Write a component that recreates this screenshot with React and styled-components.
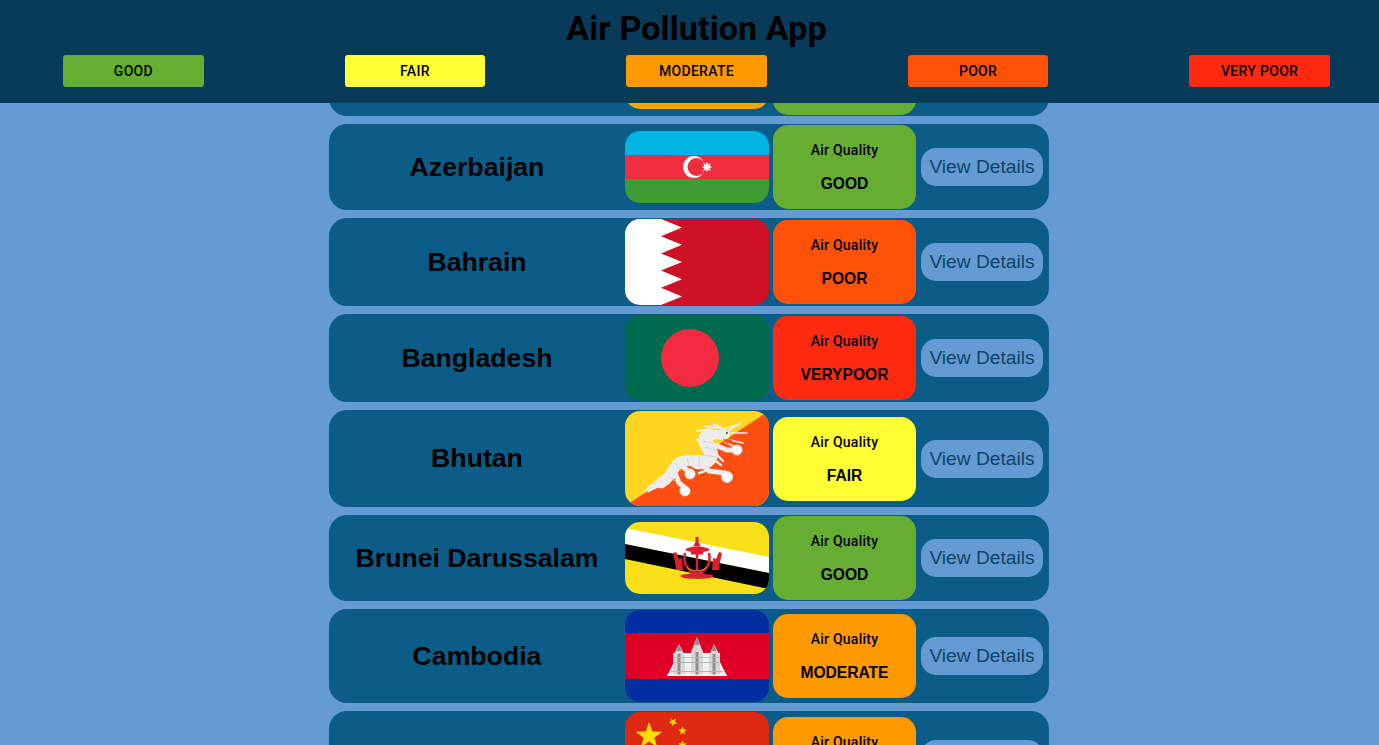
import React from "react";
import styled, { createGlobalStyle } from "styled-components";

const levels = {
  GOOD: "#65ae32",
  FAIR: "#ffff33",
  MODERATE: "#ff9900",
  POOR: "#ff5208",
  VERYPOOR: "#ff2a10"
};

const GlobalStyle = createGlobalStyle`
  html, body {
    margin: 0;
    height: 100%;
    overflow: hidden;
    background: #659bd3;
    font-family: "Liberation Sans", Arial, sans-serif;
  }
`;

const Header = styled.header`
  position: fixed;
  top: 0;
  left: 0;
  right: 0;
  height: 103px;
  z-index: 10;
  background: #083b59;
`;

const Title = styled.h1`
  margin: 0;
  padding: 8px 0 0 14px;
  height: 47px;
  box-sizing: border-box;
  text-align: center;
  font-family: Roboto, sans-serif;
  font-size: 34px;
  line-height: 40px;
  font-weight: 700;
  letter-spacing: 0.12px;
  color: #000;
`;

const Legend = styled.div`
  display: flex;
  justify-content: space-between;
  padding: 8px 49px 0 63px;
`;

const LegendItem = styled.div`
  width: 140.8px;
  height: 32px;
  border-radius: 3px;
  background: ${p => p.$color};
  color: #000;
  display: flex;
  align-items: center;
  justify-content: center;
  font-family: Roboto, sans-serif;
  font-size: 14px;
  font-weight: 500;
  letter-spacing: 0.3px;
`;

const List = styled.main`
  width: 720px;
  margin-left: 329px;
  padding-top: 30px;
  display: flex;
  flex-direction: column;
  gap: 8px;
`;

const Row = styled.section`
  display: flex;
  align-items: center;
  padding: 1px 0;
  border-radius: 18px;
  background: #0b5d88;
`;

const Name = styled.h2`
  width: 296px;
  margin: 0;
  flex: none;
  text-align: center;
  font-size: 26.67px;
  font-weight: 700;
  color: #000;
`;

const FlagSvg = styled.svg`
  display: block;
  flex: none;
  width: 144px;
  border-radius: 15px;
`;

const Quality = styled.div`
  width: 143px;
  height: 84px;
  margin: 0 5px 0 4px;
  flex: none;
  box-sizing: border-box;
  padding-top: 16px;
  border-radius: 15px;
  background: ${p => p.$color};
  text-align: center;
  color: #000;
`;

const QualityLabel = styled.div`
  font-family: Roboto, sans-serif;
  font-size: 14px;
  line-height: 18px;
  font-weight: 500;
  letter-spacing: 0.25px;
`;

const QualityValue = styled.div`
  margin-top: 16px;
  font-size: 15.6px;
  line-height: 18px;
  font-weight: 700;
`;

const DetailsButton = styled.button`
  width: 122px;
  height: 38px;
  padding: 0;
  flex: none;
  border: none;
  border-radius: 15px;
  background: #659bd3;
  color: #0d4369;
  font-family: "Liberation Sans", Arial, sans-serif;
  font-size: 19.2px;
`;

const star = (cx, cy, r, rot = -90, points = 5, inner = 0.4) => {
  const out = [];
  for (let i = 0; i < points * 2; i++) {
    const rad = i % 2 ? r * inner : r;
    const a = ((rot + (i * 180) / points) * Math.PI) / 180;
    out.push(`${(cx + rad * Math.cos(a)).toFixed(2)},${(cy + rad * Math.sin(a)).toFixed(2)}`);
  }
  return out.join(" ");
};

const Armenia = () => (
  <FlagSvg viewBox="0 0 144 72" height="72">
    <rect width="144" height="24" fill="#d90012" />
    <rect y="24" width="144" height="24" fill="#0033a0" />
    <rect y="48" width="144" height="24" fill="#f2a800" />
  </FlagSvg>
);

const Azerbaijan = () => (
  <FlagSvg viewBox="0 0 144 72" height="72">
    <rect width="144" height="24" fill="#00b5e2" />
    <rect y="24" width="144" height="24" fill="#ef2d3e" />
    <rect y="48" width="144" height="24" fill="#3f9c35" />
    <circle cx="69" cy="36" r="11" fill="#fff" />
    <circle cx="71.5" cy="36" r="9" fill="#ef2d3e" />
    <polygon points={star(82, 36, 5.5, -90, 8, 0.5)} fill="#fff" />
  </FlagSvg>
);

const Bahrain = () => (
  <FlagSvg viewBox="0 0 144 86" height="86">
    <rect width="144" height="86" fill="#ce1126" />
    <polygon
      points="0,0 36,0 57,8.6 36,17.2 57,25.8 36,34.4 57,43 36,51.6 57,60.2 36,68.8 57,77.4 36,86 0,86"
      fill="#fff"
    />
  </FlagSvg>
);

const Bangladesh = () => (
  <FlagSvg viewBox="0 0 144 86" height="86">
    <rect width="144" height="86" fill="#006a4e" />
    <circle cx="65" cy="43" r="29" fill="#f42a41" />
  </FlagSvg>
);

const Bhutan = () => (
  <FlagSvg viewBox="0 0 144 95" height="95">
    <rect width="144" height="95" fill="#ffd520" />
    <polygon points="0,95 144,0 144,95" fill="#ff4e12" />
    <g fill="none" stroke="#ececec" strokeLinecap="round" strokeLinejoin="round">
      <path d="M36 72 C43 68 46 63 50 56 C53 50 62 48 72 51" strokeWidth="11" />
      <path d="M72 51 C84 53 89 45 84 37 C79 31 79 27 84 24" strokeWidth="14" />
      <path d="M84 24 L100 24" strokeWidth="10" />
      <path d="M38 71 L25 77" strokeWidth="6" />
      <path d="M24 78 L19 81 M28 74 L21 79 M30 77 L23 81 M38 68 L29 71" strokeWidth="1.4" />
      <path d="M104 22 L122 22 M103 20 L116 12 M100 18 L111 14 M105 29 L118 32 M100 31 L110 36" strokeWidth="1.5" />
      <path d="M72 20 L86 18 M75 25 L84 19 M80 15 L92 17 M88 13 L96 18 M72 29 L80 25 M92 14 L100 19" strokeWidth="2" />
      <path d="M56 54 L63 60 M50 62 L54 72 L59 76 M78 54 L84 60 L100 62 M90 34 L102 39 L108 39" strokeWidth="5" />
      <path d="M92 44 L98 50 M88 48 L96 54 M80 60 L74 62" strokeWidth="2.4" />
    </g>
    <g fill="none" stroke="#cfcfcf" strokeWidth="0.8">
      <path d="M44 66 L50 70 M50 52 L56 60 M62 47 L64 55 M74 46 L74 56 M80 36 L92 40 M78 44 L92 46 M78 30 L88 32" />
    </g>
    <g fill="#f7f7f7" stroke="#e2e2e2" strokeWidth="1">
      <circle cx="65" cy="63" r="5" />
      <circle cx="60" cy="80" r="5" />
      <circle cx="102" cy="66" r="5.5" />
      <circle cx="112" cy="39" r="5" />
    </g>
    <path d="M98 28 L108 29 L102 33 Z" fill="#ff4e12" />
    <path d="M88 29 L94 28 L92 33 Z" fill="#ffd520" />
    <circle cx="102" cy="22" r="1" fill="#444" />
  </FlagSvg>
);

const Brunei = () => (
  <FlagSvg viewBox="0 0 144 72" height="72">
    <rect width="144" height="72" fill="#f7e017" />
    <polygon points="0,6 144,35 144,51 0,22" fill="#fff" />
    <polygon points="0,22 144,51 144,67 0,37" fill="#000" />
    <g fill="#d9202e">
      <polygon points="70.5,15 73.5,15 73.5,20 75.5,24 68.5,24 70.5,20" />
      <path d="M60 28 C65 23 79 23 85 28 C80 31 65 31 60 28 Z" />
      <rect x="70.8" y="28" width="2.4" height="20" />
      <rect x="66" y="30" width="12" height="2.5" />
      <path d="M48 31 L51 30 L54 37 L57 36 L58 48 L51 48 C51 42 49 37 48 31 Z" />
      <path d="M97 31 L94 30 L91 37 L88 36 L87 48 L94 48 C94 42 96 37 97 31 Z" />
      <path d="M55 54 C60 51 64 53 66 51 L78 51 C80 53 84 51 89 54 C84 58 78 56 72 57 C66 56 60 58 55 54 Z" />
    </g>
    <path d="M60 31 C57 44 66 51 72 51 C78 51 87 44 84 31" fill="none" stroke="#d9202e" strokeWidth="2.6" />
    <path d="M62 45 C66 50 78 50 82 45" fill="none" stroke="#e8912a" strokeWidth="1" />
  </FlagSvg>
);

const Cambodia = () => (
  <FlagSvg viewBox="0 0 144 92" height="92">
    <rect width="144" height="92" fill="#032ea1" />
    <rect y="23" width="144" height="46" fill="#e00025" />
    <polygon points="42,66 102,66 95,52 95,43 48,43 49,52" fill="#f0f0f0" />
    <g fill="#d8d8d8">
      <polygon points="54,34 48,46 48,66 60,66 60,46" />
      <polygon points="72,27 66,42 66,66 78,66 78,42" />
      <polygon points="89,34 84,46 84,66 95,66 95,46" />
    </g>
    <g fill="#8f8f8f">
      <polygon points="54,34 51.5,41 56.5,41" />
      <polygon points="72,27 69.5,35 74.5,35" />
      <polygon points="89,34 86.5,41 91.5,41" />
      <rect x="52.5" y="44" width="3" height="22" />
      <rect x="70.5" y="42" width="3" height="24" />
      <rect x="87.5" y="44" width="3" height="22" />
    </g>
    <g fill="#b5b5b5">
      <rect x="46" y="61" width="52" height="1" />
      <rect x="49" y="52" width="45" height="1" />
      <rect x="48" y="47" width="47" height="0.8" />
    </g>
    <rect x="42" y="64.5" width="60" height="1.5" fill="#ffffff" />
  </FlagSvg>
);

const China = () => (
  <FlagSvg viewBox="0 0 144 94" height="94">
    <rect width="144" height="94" fill="#de2910" />
    <polygon points={star(24, 24, 14)} fill="#ffde00" />
    <polygon points={star(48, 10, 4.5, -50)} fill="#ffde00" />
    <polygon points={star(57.5, 19, 4.5, -20)} fill="#ffde00" />
    <polygon points={star(57.5, 33, 4.5, -90)} fill="#ffde00" />
    <polygon points={star(48, 42, 4.5, -50)} fill="#ffde00" />
  </FlagSvg>
);

const countries = [
  { name: "Armenia", Flag: Armenia, quality: "GOOD" },
  { name: "Azerbaijan", Flag: Azerbaijan, quality: "GOOD" },
  { name: "Bahrain", Flag: Bahrain, quality: "POOR" },
  { name: "Bangladesh", Flag: Bangladesh, quality: "VERYPOOR" },
  { name: "Bhutan", Flag: Bhutan, quality: "FAIR" },
  { name: "Brunei Darussalam", Flag: Brunei, quality: "GOOD" },
  { name: "Cambodia", Flag: Cambodia, quality: "MODERATE" },
  { name: "China", Flag: China, quality: "MODERATE" }
];

const legend = [
  { label: "GOOD", color: levels.GOOD },
  { label: "FAIR", color: levels.FAIR },
  { label: "MODERATE", color: levels.MODERATE },
  { label: "POOR", color: levels.POOR },
  { label: "VERY POOR", color: levels.VERYPOOR }
];

const App = () => (
  <>
    <GlobalStyle />
    <Header>
      <Title>Air Pollution App</Title>
      <Legend>
        {legend.map(item => (
          <LegendItem key={item.label} $color={item.color}>
            {item.label}
          </LegendItem>
        ))}
      </Legend>
    </Header>
    <List>
      {countries.map(({ name, Flag, quality }) => (
        <Row key={name}>
          <Name>{name}</Name>
          <Flag />
          <Quality $color={levels[quality]}>
            <QualityLabel>Air Quality</QualityLabel>
            <QualityValue>{quality}</QualityValue>
          </Quality>
          <DetailsButton>View Details</DetailsButton>
        </Row>
      ))}
    </List>
  </>
);

export default App;
